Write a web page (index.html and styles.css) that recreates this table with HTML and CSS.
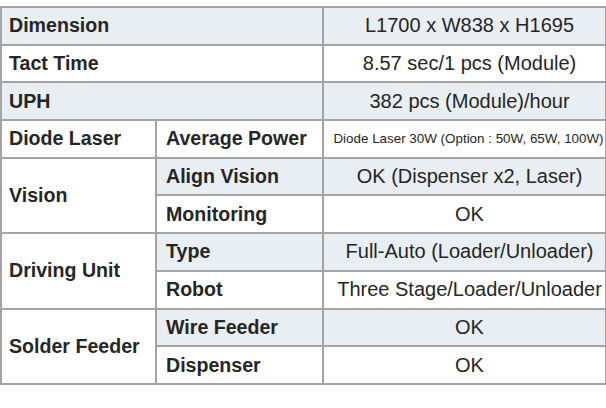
FILE: index.html
```html
<!DOCTYPE html>
<html>
<head>
<meta charset="utf-8">
<link rel="stylesheet" href="styles.css">
</head>
<body>
<table class="spec">
  <colgroup>
    <col class="c1">
    <col class="c2">
    <col class="c3">
  </colgroup>
  <tr class="shade">
    <th colspan="2">Dimension</th>
    <td>L1700 x W838 x H1695</td>
  </tr>
  <tr>
    <th colspan="2">Tact Time</th>
    <td>8.57 sec/1 pcs (Module)</td>
  </tr>
  <tr class="shade">
    <th colspan="2">UPH</th>
    <td>382 pcs (Module)/hour</td>
  </tr>
  <tr>
    <th class="group">Diode Laser</th>
    <th class="sub">Average Power</th>
    <td class="small">Diode Laser 30W (Option : 50W, 65W, 100W)</td>
  </tr>
  <tr class="shade">
    <th class="group" rowspan="2">Vision</th>
    <th class="sub">Align Vision</th>
    <td>OK (Dispenser x2, Laser)</td>
  </tr>
  <tr>
    <th class="sub">Monitoring</th>
    <td>OK</td>
  </tr>
  <tr class="shade">
    <th class="group" rowspan="2">Driving Unit</th>
    <th class="sub">Type</th>
    <td>Full-Auto (Loader/Unloader)</td>
  </tr>
  <tr>
    <th class="sub">Robot</th>
    <td>Three Stage/Loader/Unloader</td>
  </tr>
  <tr class="shade">
    <th class="group" rowspan="2">Solder Feeder</th>
    <th class="sub">Wire Feeder</th>
    <td>OK</td>
  </tr>
  <tr>
    <th class="sub">Dispenser</th>
    <td>OK</td>
  </tr>
</table>
</body>
</html>
```

FILE: styles.css
```css
html, body {
  margin: 0;
  padding: 0;
  background: #ffffff;
}

body {
  font-family: "Liberation Sans", Arial, sans-serif;
  color: #262626;
}

.spec {
  margin: 6px 0 0 0;
  width: 605px;
  border-collapse: collapse;
  table-layout: fixed;
}

.spec col.c1 {
  width: 155px;
}

.spec col.c2 {
  width: 167px;
}

.spec col.c3 {
  width: 283px;
}

.spec tr {
  height: 37.7px;
}

.spec th,
.spec td {
  border: 2px solid #a4a4a4;
  padding: 0;
  white-space: nowrap;
  overflow: hidden;
  background: #ffffff;
}

.spec th {
  text-align: left;
  font-weight: bold;
  font-size: 19.6px;
  padding-left: 7px;
}

.spec th.sub {
  padding-left: 9px;
}

.spec td {
  text-align: center;
  font-size: 20px;
  padding-left: 10px;
}

.spec td.small {
  font-size: 13.4px;
  padding-left: 8px;
  overflow: visible;
}

.spec tr.shade > th:not(.group),
.spec tr.shade > td {
  background: #e8eef2;
}
```
